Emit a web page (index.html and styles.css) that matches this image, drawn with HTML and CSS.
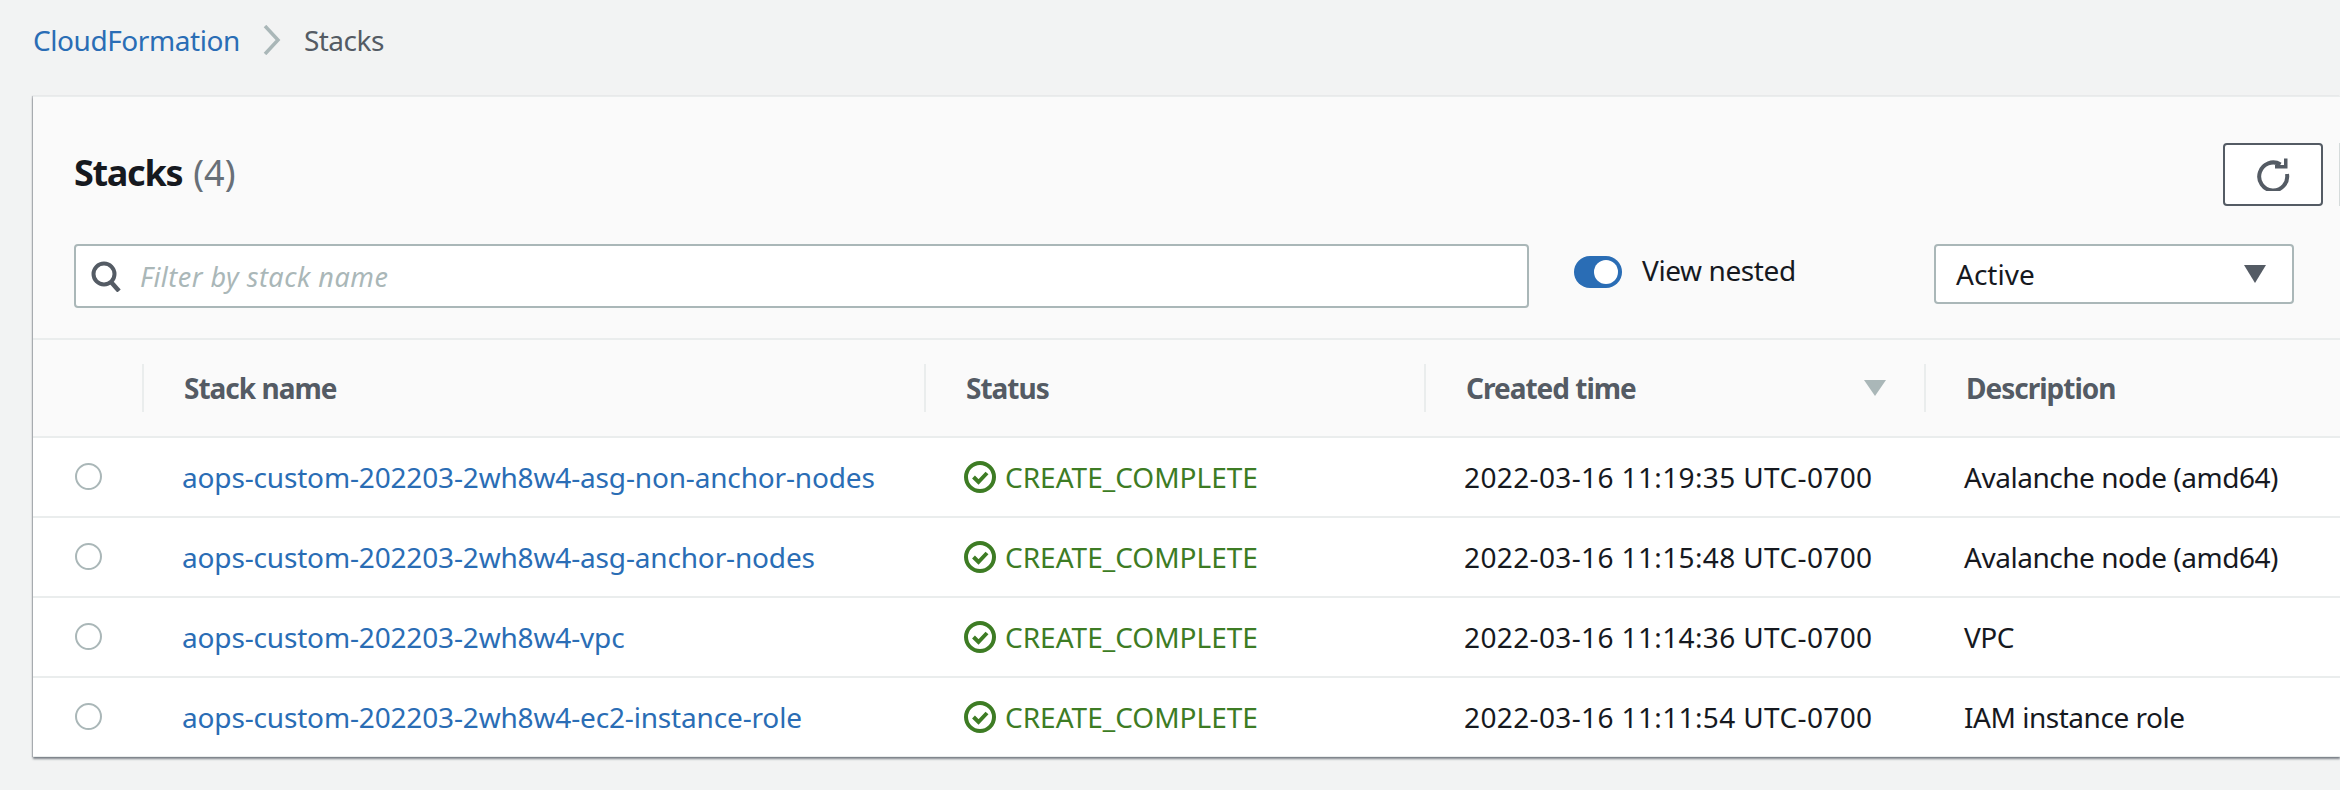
FILE: index.html
```html
<!DOCTYPE html>
<html lang="en">
<head>
<meta charset="utf-8">
<title>Stacks</title>
<link rel="stylesheet" href="styles.css">
</head>
<body>
<nav class="crumbs">
  <a class="link crumb-link" href="#">CloudFormation</a>
  <svg class="chev" width="18" height="30" viewBox="0 0 18 30"><path d="M2 1l13 14L2 29" fill="none" stroke="#aab7b8" stroke-width="3.5"/></svg>
  <span class="here">Stacks</span>
</nav>
<main class="card">
  <header class="head">
    <div class="title-row">
      <h1 class="title">Stacks <span class="count">(4)</span></h1>
      <div class="actions">
        <button class="refresh" aria-label="Refresh">
          <svg width="34" height="34" viewBox="0 0 34 34"><path d="M24.5 7.5A14 14 0 1 0 31 17" fill="none" stroke="#545b64" stroke-width="4"/><path d="M19 11.5h12.5V1.5h-3.5v6.5h-9z" fill="#545b64"/></svg>
        </button>
        <span class="next-btn"></span>
      </div>
    </div>
    <div class="filter-row">
      <div class="search">
        <svg width="30" height="31" viewBox="0 0 30 31"><circle cx="13" cy="13" r="10.5" fill="none" stroke="#545b64" stroke-width="4"/><path d="M20 21l8 9" stroke="#545b64" stroke-width="4.5" fill="none"/></svg>
        <span class="placeholder">Filter by stack name</span>
      </div>
      <div class="toggle-wrap">
        <span class="toggle"><span class="knob"></span></span>
        <span class="toggle-label">View nested</span>
      </div>
      <div class="select">
        <span>Active</span>
        <svg width="22" height="18" viewBox="0 0 22 18"><path d="M0 0h22L11 18z" fill="#545b64"/></svg>
      </div>
    </div>
  </header>
  <table class="stacks">
    <colgroup><col class="c-sel"><col class="c-name"><col class="c-status"><col class="c-time"><col></colgroup>
    <thead>
      <tr>
        <th></th>
        <th><span class="th-in">Stack name</span></th>
        <th><span class="th-in">Status</span></th>
        <th><span class="th-in th-sort">Created time<svg width="22" height="16" viewBox="0 0 22 16"><path d="M0 0h22L11 16z" fill="#aab7b8"/></svg></span></th>
        <th><span class="th-in">Description</span></th>
      </tr>
    </thead>
    <tbody>
      <tr>
        <td><span class="radio"></span></td>
        <td><a class="link" href="#">aops-custom-202203-2wh8w4-asg-non-anchor-nodes</a></td>
        <td><span class="status"><svg width="32" height="32" viewBox="0 0 32 32"><circle cx="16" cy="16" r="14" fill="none" stroke="#3d7c24" stroke-width="4"/><path d="M9.500 16l5 5 8.500-9" fill="none" stroke="#3d7c24" stroke-width="4"/></svg>CREATE_COMPLETE</span></td>
        <td class="time">2022-03-16 11:19:35 UTC-0700</td>
        <td class="desc">Avalanche node (amd64)</td>
      </tr>
      <tr>
        <td><span class="radio"></span></td>
        <td><a class="link" href="#">aops-custom-202203-2wh8w4-asg-anchor-nodes</a></td>
        <td><span class="status"><svg width="32" height="32" viewBox="0 0 32 32"><circle cx="16" cy="16" r="14" fill="none" stroke="#3d7c24" stroke-width="4"/><path d="M9.500 16l5 5 8.500-9" fill="none" stroke="#3d7c24" stroke-width="4"/></svg>CREATE_COMPLETE</span></td>
        <td class="time">2022-03-16 11:15:48 UTC-0700</td>
        <td class="desc">Avalanche node (amd64)</td>
      </tr>
      <tr>
        <td><span class="radio"></span></td>
        <td><a class="link" href="#">aops-custom-202203-2wh8w4-vpc</a></td>
        <td><span class="status"><svg width="32" height="32" viewBox="0 0 32 32"><circle cx="16" cy="16" r="14" fill="none" stroke="#3d7c24" stroke-width="4"/><path d="M9.500 16l5 5 8.500-9" fill="none" stroke="#3d7c24" stroke-width="4"/></svg>CREATE_COMPLETE</span></td>
        <td class="time">2022-03-16 11:14:36 UTC-0700</td>
        <td class="desc">VPC</td>
      </tr>
      <tr>
        <td><span class="radio"></span></td>
        <td><a class="link" href="#">aops-custom-202203-2wh8w4-ec2-instance-role</a></td>
        <td><span class="status"><svg width="32" height="32" viewBox="0 0 32 32"><circle cx="16" cy="16" r="14" fill="none" stroke="#3d7c24" stroke-width="4"/><path d="M9.500 16l5 5 8.500-9" fill="none" stroke="#3d7c24" stroke-width="4"/></svg>CREATE_COMPLETE</span></td>
        <td class="time">2022-03-16 11:11:54 UTC-0700</td>
        <td class="desc">IAM instance role</td>
      </tr>
    </tbody>
  </table>
</main>
</body>
</html>
```
FILE: styles.css
```css
* { box-sizing: border-box; }
html, body { margin: 0; height: 790px; overflow: hidden; }
body {
  background: #f2f3f3;
  font-family: "Noto Sans", "Open Sans", sans-serif;
  font-size: 28px;
  color: #16191f;
  padding: 0 0 0 33px;
}
.link { color: #2a6db5; text-decoration: none; letter-spacing: -.16px; }
.crumbs { display: flex; align-items: center; height: 96px; padding-bottom: 16px; }
.crumb-link { letter-spacing: -.43px; }
.chev { margin: 0 23px; }
.here { color: #545b64; letter-spacing: -.5px; }
.card {
  background: #fafafa;
  border-top: 1px solid #eaeded;
  box-shadow: 0 2px 2px rgba(84, 91, 100, .75), -1px 0 1px rgba(84, 91, 100, .3);
  height: 661px;
  overflow: hidden;
}
.head { height: 243px; padding: 45px 0 0 41px; border-bottom: 2px solid #eaeded; }
.title-row { display: flex; justify-content: space-between; align-items: center; height: 64px; }
.title { margin: -3px 0 0; font-size: 36px; font-weight: 700; letter-spacing: -1.3px; }
.count { font-weight: 400; color: #687078; letter-spacing: 0; margin-left: 3px; }
.actions { display: flex; gap: 16px; }
.refresh {
  width: 100px; height: 63px; background: #fff;
  border: 2px solid #545b64; border-radius: 4px;
  display: flex; align-items: center; justify-content: center; padding: 0;
}
.next-btn { width: 1px; height: 63px; background: #d5dbdb; }
.filter-row { display: flex; align-items: flex-start; margin-top: 38px; }
.search {
  width: 1455px; height: 64px; background: #fff;
  border: 2px solid #aab7b8; border-radius: 4px;
  display: flex; align-items: center; gap: 19px; padding-left: 15px;
}
.placeholder { font-style: italic; color: #aab7b8; font-size: 27px; letter-spacing: .5px; }
.toggle-wrap { display: flex; align-items: flex-start; gap: 20px; margin: 12px 0 0 45px; width: 360px; }
.toggle {
  width: 48px; height: 32px; border-radius: 16px; background: #2a6db5;
  display: flex; justify-content: flex-end; align-items: center; padding-right: 4px; flex: none;
}
.knob { width: 24px; height: 24px; border-radius: 50%; background: #fff; }
.toggle-label { line-height: 32px; margin-top: -2px; letter-spacing: -.4px; }
.select {
  width: 360px; height: 60px; background: #fff;
  border: 2px solid #aab7b8; border-radius: 4px;
  display: flex; align-items: center; justify-content: space-between; padding: 0 26px 0 20px;
}
.stacks { border-collapse: collapse; table-layout: fixed; width: 2307px; }
.c-sel { width: 109px; }
.c-name { width: 782px; }
.c-status { width: 500px; }
.c-time { width: 500px; }
th {
  height: 97px; padding: 0; text-align: left; font-weight: 700; color: #545b64;
  border-bottom: 2px solid #eaeded;
}
.th-in {
  display: flex; align-items: center; height: 48px; letter-spacing: -1px;
  border-left: 2px solid #eaeded; padding-left: 40px;
}
.th-sort { justify-content: space-between; padding-right: 38px; }
tbody tr { height: 80px; background: #fff; }
td { padding: 0 0 0 40px; border-bottom: 2px solid #eaeded; white-space: nowrap; }
td:first-child { padding-left: 42px; }
.time { letter-spacing: .37px; }
.desc { letter-spacing: -.47px; }
.radio { display: block; width: 27px; height: 27px; margin-bottom: 2px; border: 2px solid #aab7b8; border-radius: 50%; background: #fff; }
.status { display: flex; align-items: center; gap: 9px; color: #3d7c24; }
```
